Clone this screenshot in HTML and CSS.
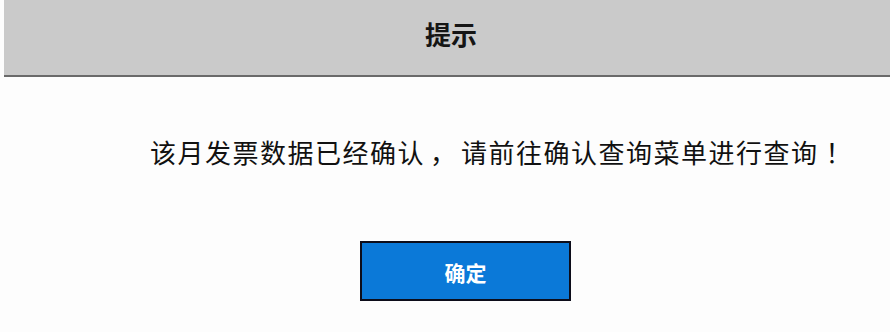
FILE: index.html
```html
<!DOCTYPE html>
<html lang="zh-CN">
<head>
<meta charset="utf-8">
<title>提示</title>
<link rel="stylesheet" href="styles.css">
</head>
<body>
<div class="dialog">
  <div class="dialog-header">提示</div>
  <div class="dialog-body">
    <p class="message">该月发票数据已经确认<span class="punct comma">，</span>请前往确认查询菜单进行查询<span class="punct bang">！</span></p>
    <div class="actions">
      <button class="btn-ok" type="button">确定</button>
    </div>
  </div>
</div>
</body>
</html>
```
FILE: styles.css
```css
html, body {
  margin: 0;
  padding: 0;
  background: #fdfdfd;
}
body {
  width: 890px;
  height: 332px;
  overflow: hidden;
  font-family: "Noto Sans CJK SC", sans-serif;
  color: #111;
}
.dialog {
  display: flex;
  flex-direction: column;
}
.dialog-header {
  margin-left: 4px;
  height: 77px;
  background: #cacaca;
  border-bottom: 2px solid #6a6a6a;
  display: flex;
  align-items: center;
  justify-content: center;
  padding-left: 8px;
  padding-bottom: 8px;
  box-sizing: border-box;
  font-size: 26px;
  font-weight: 700;
  color: #151515;
  line-height: 1;
}
.dialog-body {
  display: flex;
  flex-direction: column;
}
.message {
  margin: 62px 0 0 0;
  padding-left: 150px;
  font-size: 26px;
  line-height: 26px;
  height: 26px;
  letter-spacing: 1.5px;
  white-space: nowrap;
  color: #111;
}
.punct {
  display: inline-block;
  text-align: center;
  letter-spacing: 0;
}
.comma {
  width: 36px;
}
.bang {
  width: 40px;
}
.actions {
  margin-top: 76px;
  padding-left: 360px;
  display: flex;
}
.btn-ok {
  width: 211px;
  height: 60px;
  background: #0b79d8;
  border: 2px solid #0d0d1a;
  color: #fff;
  font-family: "Noto Sans CJK SC", sans-serif;
  font-size: 21px;
  font-weight: 700;
  padding: 0;
  padding-top: 3px;
  box-sizing: border-box;
  line-height: 1;
}
```
